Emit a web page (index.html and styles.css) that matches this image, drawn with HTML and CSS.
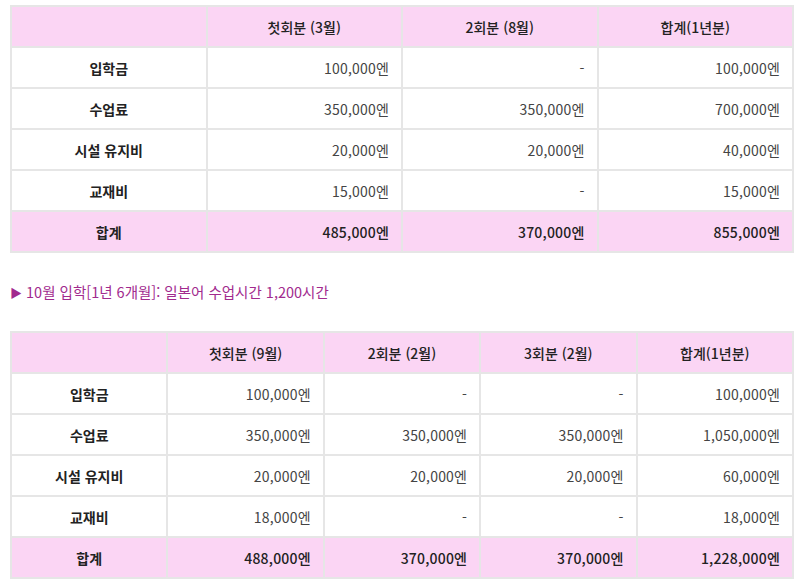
FILE: index.html
```html
<!DOCTYPE html>
<html lang="ko">
<head>
<meta charset="utf-8">
<link rel="stylesheet" href="styles.css">
</head>
<body>
<div class="page">
  <table class="fee">
    <thead>
      <tr><th></th><th>첫회분 (3월)</th><th>2회분 (8월)</th><th>합계(1년분)</th></tr>
    </thead>
    <tbody>
      <tr><th>입학금</th><td>100,000엔</td><td>-</td><td>100,000엔</td></tr>
      <tr><th>수업료</th><td>350,000엔</td><td>350,000엔</td><td>700,000엔</td></tr>
      <tr><th>시설 유지비</th><td>20,000엔</td><td>20,000엔</td><td>40,000엔</td></tr>
      <tr><th>교재비</th><td>15,000엔</td><td>-</td><td>15,000엔</td></tr>
      <tr class="total"><th>합계</th><td>485,000엔</td><td>370,000엔</td><td>855,000엔</td></tr>
    </tbody>
  </table>

  <p class="section-title"><span class="arrow">▶</span> 10월 입학[1년 6개월]: 일본어 수업시간 1,200시간</p>

  <table class="fee">
    <thead>
      <tr><th></th><th>첫회분 (9월)</th><th>2회분 (2월)</th><th>3회분 (2월)</th><th>합계(1년분)</th></tr>
    </thead>
    <tbody>
      <tr><th>입학금</th><td>100,000엔</td><td>-</td><td>-</td><td>100,000엔</td></tr>
      <tr><th>수업료</th><td>350,000엔</td><td>350,000엔</td><td>350,000엔</td><td>1,050,000엔</td></tr>
      <tr><th>시설 유지비</th><td>20,000엔</td><td>20,000엔</td><td>20,000엔</td><td>60,000엔</td></tr>
      <tr><th>교재비</th><td>18,000엔</td><td>-</td><td>-</td><td>18,000엔</td></tr>
      <tr class="total"><th>합계</th><td>488,000엔</td><td>370,000엔</td><td>370,000엔</td><td>1,228,000엔</td></tr>
    </tbody>
  </table>
</div>
</body>
</html>
```

FILE: styles.css
```css
html, body {
  margin: 0;
  padding: 0;
  background: #ffffff;
}

body {
  font-family: "Noto Sans CJK KR", "Noto Sans", sans-serif;
  font-size: 14px;
  color: #333333;
}

.page {
  padding: 5px 6px 0 10px;
}

.fee {
  width: 784px;
  border-collapse: collapse;
  table-layout: fixed;
}

.fee th,
.fee td {
  border: 2px solid #e6e6e6;
  height: 39px;
  padding: 0 12px;
  line-height: 20px;
}

.fee thead th {
  background: #fbd5f4;
  font-weight: 500;
  text-align: center;
  color: #222222;
}

.fee tbody th {
  font-weight: 700;
  text-align: center;
  color: #222222;
}

.fee td {
  text-align: right;
  color: #444444;
  letter-spacing: 0.2px;
}

.fee tr.total th,
.fee tr.total td {
  background: #fbd5f4;
}

.fee tr.total td {
  font-weight: 500;
  color: #222222;
}

.section-title {
  margin: 29px 0 28px 0;
  color: #a12a8e;
  font-size: 14.5px;
  line-height: 20px;
}

.arrow {
  font-size: 12px;
}
```
